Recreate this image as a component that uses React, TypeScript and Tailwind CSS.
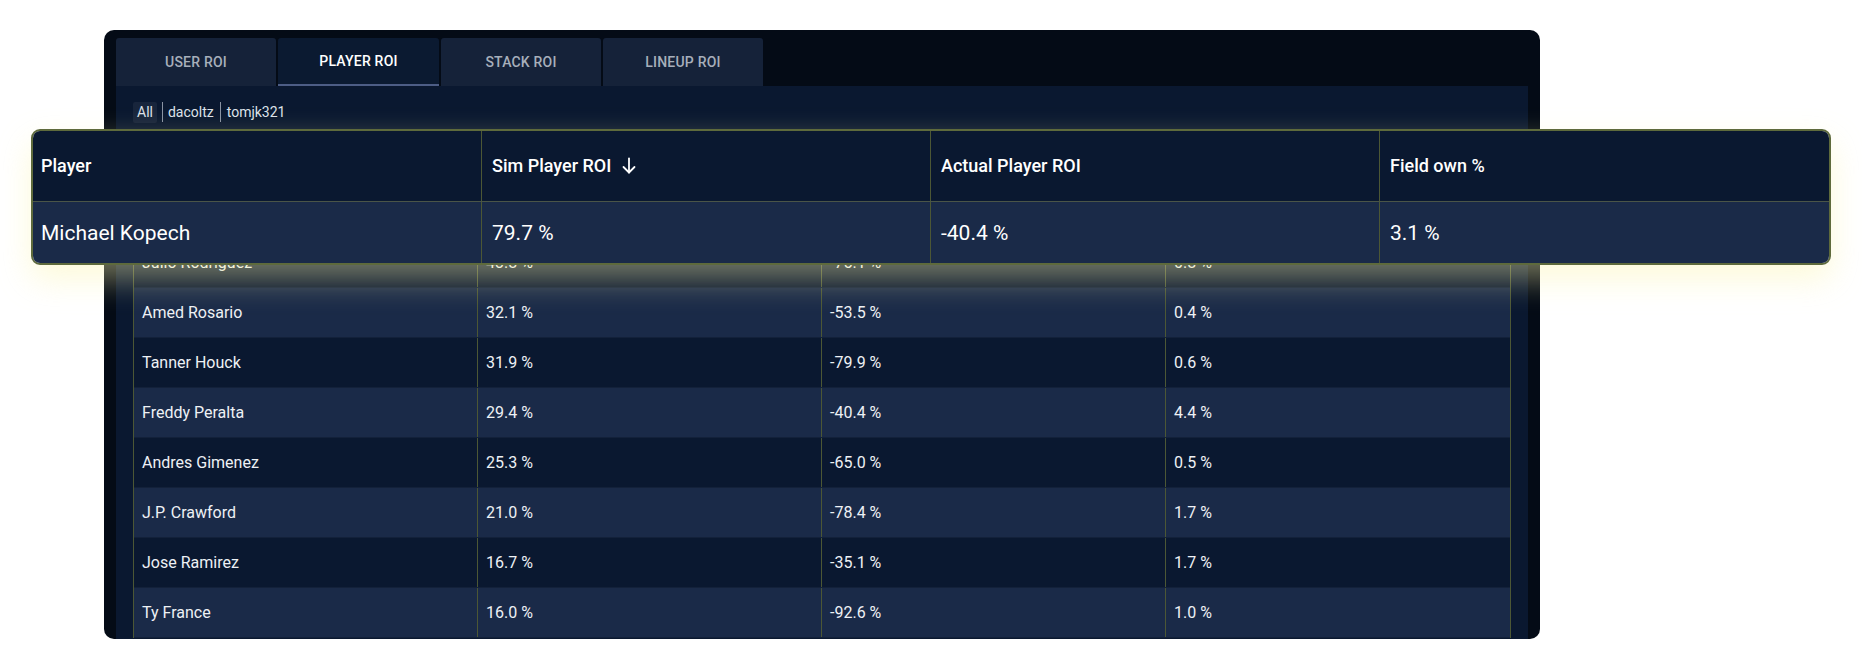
import React from "react";

const rows = [
  ["Michael Kopech", "79.7 %", "-40.4 %", "3.1 %"],
  ["Julio Rodriguez", "43.8 %", "-75.1 %", "0.8 %"],
  ["Amed Rosario", "32.1 %", "-53.5 %", "0.4 %"],
  ["Tanner Houck", "31.9 %", "-79.9 %", "0.6 %"],
  ["Freddy Peralta", "29.4 %", "-40.4 %", "4.4 %"],
  ["Andres Gimenez", "25.3 %", "-65.0 %", "0.5 %"],
  ["J.P. Crawford", "21.0 %", "-78.4 %", "1.7 %"],
  ["Jose Ramirez", "16.7 %", "-35.1 %", "1.7 %"],
  ["Ty France", "16.0 %", "-92.6 %", "1.0 %"],
];

const tabs = ["USER ROI", "PLAYER ROI", "STACK ROI", "LINEUP ROI"];

function ArrowDown() {
  return (
    <svg width="14" height="17" viewBox="0 0 14 17" fill="none" stroke="currentColor" strokeWidth="1.8" strokeLinecap="round" strokeLinejoin="round">
      <path d="M7 1.5v14" />
      <path d="M1.5 10 7 15.5 12.5 10" />
    </svg>
  );
}

export default function App() {
  return (
    <div className="relative w-[1862px] h-[670px] bg-white overflow-hidden font-['Roboto',sans-serif]">
      <div className="pt-[30px] pl-[104px]">
        <div className="w-[1436px] h-[609px] rounded-[10px] bg-[#040b16] px-[12px] pt-[8px] flex flex-col overflow-hidden">
          <div className="flex gap-[2px] h-[48px] shrink-0">
            {tabs.map((t, i) => (
              <div
                key={t}
                className={
                  i === 1
                    ? "w-[161px] flex items-center justify-center bg-[#0b1a31] text-white text-[14px] font-medium tracking-[0.2px] border-b-[2px] border-[#4d5d85] rounded-t-[3px]"
                    : "w-[160px] flex items-center justify-center bg-[#152239] text-[#a7afbb] text-[14px] font-medium tracking-[0.2px] rounded-t-[3px]"
                }
              >
                {t}
              </div>
            ))}
          </div>
          <div className="flex-1 bg-[#0a1830] pl-[17px] pr-[17px] pt-[16px] overflow-hidden">
            <div className="flex items-center h-[20px] text-[14px] text-[#dde2ea]">
              <span className="bg-[#18253c] px-[4px] h-[21px] flex items-center rounded-[2px]">All</span>
              <span className="w-px h-[20px] bg-[#8a93a3] mx-[5px]" />
              <span>dacoltz</span>
              <span className="w-px h-[20px] bg-[#8a93a3] mx-[6px]" />
              <span>tomjk321</span>
            </div>
            <div className="mt-[8px] border-l border-r border-[#4c5735]">
              <div className="grid grid-cols-4 h-[58px] bg-[#0a1830] border-b border-[#2a3540]">
                {["Player", "Sim Player ROI", "Actual Player ROI", "Field own %"].map((h, i) => (
                  <div key={h} className={`flex items-center px-[8px] text-white text-[16px] font-medium ${i < 3 ? "border-r border-[#4c5735]" : ""}`}>
                    {h}
                  </div>
                ))}
              </div>
              {rows.map((r, ri) => (
                <div
                  key={r[0]}
                  className={`grid grid-cols-4 h-[50px] border-b border-[#13213a] ${ri % 2 === 0 ? "bg-[#1a2a48]" : "bg-[#0a1830]"}`}
                >
                  {r.map((c, ci) => (
                    <div key={ci} className={`flex items-center px-[8px] text-[#eef1f5] text-[16px] ${ci < 3 ? "border-r border-[#4c5735]" : ""}`}>
                      {c}
                    </div>
                  ))}
                </div>
              ))}
            </div>
          </div>
        </div>
      </div>

      <div className="absolute left-[31px] top-[129px] w-[1800px] h-[136px] rounded-[9px] border-2 border-[#5e6a3c] overflow-hidden shadow-[0_14px_32px_rgba(250,245,170,0.45)] flex flex-col">
        <div className="grid grid-cols-4 h-[71px] bg-[#0a1830] border-b border-[#4a5548]">
          <div className="flex items-center pb-[2px] px-[8px] text-white text-[18px] font-medium border-r border-[#4c5735]">Player</div>
          <div className="flex items-center pb-[2px] px-[10px] text-white text-[18px] font-medium border-r border-[#4c5735] gap-[11px]">
            <span>Sim Player ROI</span>
            <ArrowDown />
          </div>
          <div className="flex items-center pb-[2px] px-[10px] text-white text-[18px] font-medium border-r border-[#4c5735]">Actual Player ROI</div>
          <div className="flex items-center pb-[2px] px-[10px] text-white text-[18px] font-medium">Field own %</div>
        </div>
        <div className="grid grid-cols-4 flex-1 bg-[#1a2a48]">
          <div className="flex items-center pt-[2px] px-[8px] text-white text-[21px] border-r border-[#4c5735]">Michael Kopech</div>
          <div className="flex items-center pt-[2px] px-[10px] text-white text-[21px] border-r border-[#4c5735]">79.7 %</div>
          <div className="flex items-center pt-[2px] px-[10px] text-white text-[21px] border-r border-[#4c5735]">-40.4 %</div>
          <div className="flex items-center pt-[2px] px-[10px] text-white text-[21px]">3.1 %</div>
        </div>
      </div>
    </div>
  );
}
